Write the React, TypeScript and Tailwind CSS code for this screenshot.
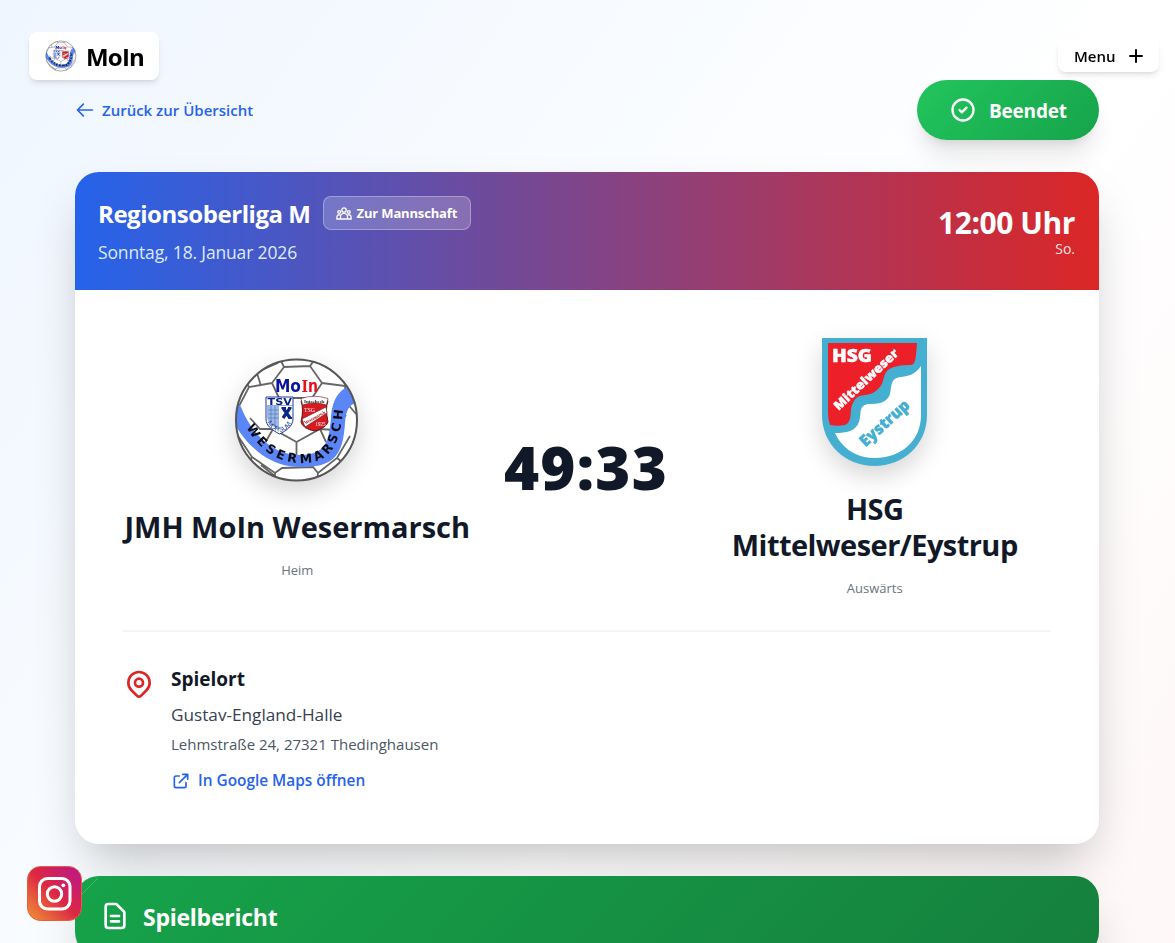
import type { ReactNode } from "react";

function Icon({ d, className, strokeWidth = 2 }: { d: string; className: string; strokeWidth?: number }) {
  return (
    <svg
      viewBox="0 0 24 24"
      fill="none"
      stroke="currentColor"
      strokeWidth={strokeWidth}
      strokeLinecap="round"
      strokeLinejoin="round"
      className={className}
    >
      <path d={d} />
    </svg>
  );
}

const icons = {
  arrowLeft: "M10 19l-7-7m0 0l7-7m-7 7h18",
  checkCircle: "M9 12l2 2 4-4m6 2a9 9 0 11-18 0 9 9 0 0118 0z",
  pin: "M17.657 16.657L13.414 20.9a1.998 1.998 0 01-2.827 0l-4.244-4.243a8 8 0 1111.314 0zM15 11a3 3 0 11-6 0 3 3 0 016 0z",
  external: "M10 6H6a2 2 0 00-2 2v10a2 2 0 002 2h10a2 2 0 002-2v-4M14 4h6m0 0v6m0-6L10 14",
  document:
    "M9 12h6m-6 4h6m2 5H7a2 2 0 01-2-2V5a2 2 0 012-2h5.586a1 1 0 01.707.293l5.414 5.414a1 1 0 01.293.707V19a2 2 0 01-2 2z",
  plus: "M12 3v18M3 12h18",
};

function TeamIcon({ className }: { className: string }) {
  return (
    <svg viewBox="0 0 16 13" fill="none" stroke="currentColor" strokeWidth={1.3} className={className}>
      <circle cx="8" cy="3" r="2.200" />
      <circle cx="3.200" cy="5" r="1.400" />
      <circle cx="12.800" cy="5" r="1.400" />
      <path d="M4.500 12V9.900a3.500 3.500 0 017 0V12zM4.500 12H.9v-2a2.300 2.300 0 013.300-2M11.500 12h3.600v-2a2.300 2.300 0 00-3.300-2" />
    </svg>
  );
}

function MoinCrest({ id, className }: { id: string; className: string }) {
  return (
    <svg viewBox="0 0 128 128" className={className}>
      <defs>
        <clipPath id={`${id}-ball`}>
          <circle cx="63.5" cy="64" r="60.5" />
        </clipPath>
        <path id={`${id}-text`} d="M13.500 71C26 95 46 107 69 107C96 107 107 91 110 54" />
      </defs>
      <circle cx="63.5" cy="64" r="60.5" fill="#fff" />
      <g clipPath={`url(#${id}-ball)`}>
        <path
          fill="none"
          stroke="#666"
          strokeWidth="1.800"
          d="M47 3L51 11 77 10 82 3M51 11L39 27 46 42 79 42 89 27 77 10M39 27L16 31 5 52M16 31L13 26 24 16 45 7M89 27L112 30 116 26M112 30L113 46 123 58M82 5L99 10 117 28M63.5 86L40 73 27 73 17 62M63.5 86L87 73 101 74 113 59M63.5 86V104M40 73L32 87M87 73L93 86M5 80L19 101 16 107M19 101L42 117 49 112 80 111 85 117 104 102 117 80M42 117L42 125M85 117L84 125M104 102L109 106M28 109L43 121M24 17L28 30"
        />
        <path
          d="M2 43L8 51C20 81 42 99 67 99C93 99 96 85 98 62C99 42 108 32 118 30L128 47C117 46 113 53 112 67C110 97 103 111 70 111C36 112 13 89 0 65z"
          fill="#5b86f7"
        />
      </g>
      <circle cx="63.5" cy="64" r="60.5" fill="none" stroke="#555" strokeWidth="2" />
      <text
        x="42"
        y="35.500"
        fontSize="17"
        textLength="26"
        lengthAdjust="spacingAndGlyphs"
        className="font-['DejaVu_Sans'] font-bold"
        fill="#0a14a0"
      >
        Mo
      </text>
      <text
        x="68.500"
        y="35.500"
        fontSize="17"
        textLength="16.500"
        lengthAdjust="spacingAndGlyphs"
        className="font-['DejaVu_Serif'] font-bold"
        fill="#e8101c"
      >
        I<tspan className="font-['DejaVu_Sans']">n</tspan>
      </text>
      <path d="M33 41H60V63C60 70 53 75 46.500 78C39 74 33 70 33 63z" fill="#fff" stroke="#1b3a9d" strokeWidth="1" />
      <path d="M34 50H46V74C39 70 34 67 34 60z" fill="#9db9e6" />
      <path d="M34 49.500H60M35 54H46M35 58H46M35 62H46M38 50V68M42 50V71" stroke="#4b70bd" strokeWidth=".6" />
      <path d="M50 52L57 62M57 52L50 62" stroke="#0b258f" strokeWidth="3.200" />
      <path d="M48.500 52H53M55 52H58.500M55.500 62H59" stroke="#0b258f" strokeWidth="2" />
      <text
        x="34.500"
        y="48.500"
        fontSize="8.500"
        textLength="24.500"
        lengthAdjust="spacingAndGlyphs"
        fill="#0b1d80"
        className="font-['DejaVu_Sans'] font-bold"
      >
        TSV
      </text>
      <path id={`${id}-morsum`} d="M34.500 66Q38 75 47 75.500Q56 75 59 64" fill="none" />
      <text fontSize="6.500" fill="#1b3a9d" className="font-['Liberation_Sans']">
        <textPath href={`#${id}-morsum`} textLength="31">
          MORSUM
        </textPath>
      </text>
      <path
        d="M68 45Q81 40 95 45Q92 52 95 66Q93 72 82 75Q70 73 68 66Q71 53 68 45z"
        fill="#d81920"
        stroke="#641318"
        strokeWidth="1"
      />
      <path
        d="M68 42.500Q81 38 95 42.500L93.500 49Q81 45 69.500 49zM69 63L93 51 94 57 72 71z"
        fill="#fff"
        stroke="#641318"
        strokeWidth=".6"
      />
      <text
        x="71"
        y="46.500"
        fontSize="5"
        textLength="21"
        lengthAdjust="spacingAndGlyphs"
        fill="#222"
        className="font-['Liberation_Serif'] font-bold"
      >
        Intschede
      </text>
      <text
        x="71"
        y="56"
        fontSize="6"
        textLength="11"
        lengthAdjust="spacingAndGlyphs"
        fill="#fff"
        className="font-['Liberation_Serif']"
      >
        TSG
      </text>
      <text
        transform="translate(72.500 68.500) rotate(-29)"
        fontSize="5"
        textLength="23"
        lengthAdjust="spacingAndGlyphs"
        fill="#a3141a"
        className="font-['Liberation_Serif'] font-bold"
      >
        Wesermarsch
      </text>
      <text
        x="82.500"
        y="70"
        fontSize="5.500"
        textLength="10"
        lengthAdjust="spacingAndGlyphs"
        fill="#fff"
        className="font-['Liberation_Serif']"
      >
        1925
      </text>
      <text fontSize="12.500" fill="#080a14" className="font-['DejaVu_Sans'] font-bold">
        <textPath href={`#${id}-text`} textLength="146">
          WESERMARSCH
        </textPath>
      </text>
    </svg>
  );
}

function HsgCrest({ className }: { className: string }) {
  return (
    <svg viewBox="0 0 105 128" className={className}>
      <path d="M0 0H105V77C105 107 81 128 52.500 128S0 107 0 77z" fill="#45afd2" />
      <path
        d="M6 5H95C94 17 94 27 89 27C79 27 70 28 65 33C60 39 63 45 56 51C48 60 37 54 32 63C26 72 32 83 23 87C18 88 13 88 8 87Q6 81 6 75z"
        fill="#ed1f29"
      />
      <path
        d="M99 28V77C99 103 79 120 52.500 120C34 120 20 110 13 95C24 95 34 93 37 84C40 75 36 68 46 66C57 66 65 65 68 56C70 48 68 40 79 39C89 38 94 35 99 28z"
        fill="#fff"
      />
      <g className="font-['Open_Sans'] font-extrabold" strokeWidth=".4">
        <text x="10" y="23.500" fontSize="17" fill="#fff" stroke="#fff" textLength="40" lengthAdjust="spacingAndGlyphs">
          HSG
        </text>
        <text
          transform="translate(16.500 73) rotate(-43)"
          fontSize="12.500"
          fill="#fff"
          stroke="#fff"
          textLength="83"
          lengthAdjust="spacingAndGlyphs"
        >
          Mittelweser
        </text>
        <text
          transform="translate(43.500 109.500) rotate(-42)"
          fontSize="16"
          fill="#45afd2"
          stroke="#45afd2"
          textLength="61"
          lengthAdjust="spacingAndGlyphs"
        >
          Eystrup
        </text>
      </g>
    </svg>
  );
}

function Team({ name, side, children }: { name: ReactNode; side: string; children: ReactNode }) {
  return (
    <div className="flex min-w-0 flex-1 flex-col items-center text-center">
      <div className="mb-[25px] drop-shadow-[0_10px_12px_rgba(0,0,0,0.16)]">{children}</div>
      <h2 className="text-[29px] leading-9 font-bold text-[#111827]">{name}</h2>
      <p className="mt-[15px] text-[13px] leading-5 text-[#6b7280]">{side}</p>
    </div>
  );
}

function InstagramButton() {
  return (
    <a href="#" className="fixed bottom-[22px] left-[27px] z-40 block size-[55px]" aria-label="Instagram">
      <svg viewBox="0 0 55 55" className="size-full">
        <defs>
          <linearGradient id="insta" x1="0" y1="1" x2="1" y2="0">
            <stop offset="0.1" stopColor="#ec8037" />
            <stop offset="0.5" stopColor="#dc2743" />
            <stop offset="0.95" stopColor="#bc1888" />
          </linearGradient>
        </defs>
        <rect x=".5" y=".5" width="54" height="54" rx="13" fill="url(#insta)" stroke="#e4603c" />
        <g fill="none" stroke="#fff" strokeWidth="3">
          <rect x="12.500" y="12.500" width="30.500" height="30.500" rx="8" />
          <circle cx="27.500" cy="28" r="7.200" />
        </g>
        <circle cx="36.300" cy="19.300" r="1.900" fill="#fff" />
      </svg>
    </a>
  );
}

export default function App() {
  return (
    <div className="h-[943px] overflow-hidden bg-linear-to-br/srgb from-[#eff6ff] via-white to-[#fef2f2] bg-[length:100%_1600px] bg-no-repeat font-['Open_Sans',sans-serif]">
      <a
        href="#"
        className="fixed top-8 left-[29px] z-40 flex h-12 w-[130px] items-center gap-[9px] rounded-lg bg-white px-4 shadow-md"
      >
        <MoinCrest id="nav" className="size-8 shrink-0" />
        <span className="pt-0.5 text-2xl font-bold tracking-[-0.8px] text-black">MoIn</span>
      </a>
      <button
        type="button"
        className="fixed top-10 right-4 z-40 flex h-8 w-[101px] items-center justify-between rounded-lg bg-white pr-[15px] pl-4 text-[15px] font-semibold text-black shadow-md"
      >
        <span className="pt-px">Menu</span>
        <Icon d={icons.plus} strokeWidth={3} className="size-4" />
      </button>

      <main className="ml-[75px] w-full max-w-5xl pt-20">
        <div className="mb-8 flex items-center justify-between">
          <a href="#" className="flex items-center gap-[7px] text-[15px] font-semibold text-[#2563eb]">
            <Icon d={icons.arrowLeft} className="size-5" />
            <span className="pt-px">Zurück zur Übersicht</span>
          </a>
          <div className="flex h-15 w-[182px] items-center gap-3 rounded-full bg-linear-135/srgb from-[#22c55e] to-[#16a34a] px-8 text-[19px] font-bold tracking-[-0.2px] text-white shadow-xl">
            <Icon d={icons.checkCircle} className="size-7 shrink-0" />
            <span className="pt-0.5">Beendet</span>
          </div>
        </div>

        <section className="mb-8 h-[672px] overflow-hidden rounded-3xl bg-white shadow-2xl">
          <header className="flex h-[118px] items-center justify-between bg-linear-to-r/srgb from-[#2563eb] to-[#dc2626] p-6 pl-[23px] text-white">
            <div>
              <div className="mb-2 flex items-center gap-3">
                <h1 className="pt-0.5 text-2xl font-bold tracking-[-0.45px]">Regionsoberliga M</h1>
                <a
                  href="#"
                  className="flex h-[34px] w-[148px] items-center gap-[5px] rounded-lg border border-white/30 bg-white/20 px-3 text-[13px] font-bold tracking-[-0.15px] whitespace-nowrap"
                >
                  <TeamIcon className="h-[13px] w-4 shrink-0" />
                  <span className="pt-px">Zur Mannschaft</span>
                </a>
              </div>
              <p className="text-[17.5px] leading-7 tracking-[-0.15px] text-[#dbeafe]">Sonntag, 18. Januar 2026</p>
            </div>
            <div className="text-right">
              <div className="pt-0.5 text-3xl leading-9 font-bold tracking-[-0.45px]">12:00 Uhr</div>
              <div className="-mt-0.5 text-sm text-[#fee2e2]">So.</div>
            </div>
          </header>

          <div className="p-12">
            <div className="flex items-center gap-8 pr-0.5">
              <Team name={<span className="whitespace-nowrap">JMH MoIn Wesermarsch</span>} side="Heim">
                <MoinCrest id="home" className="size-32" />
              </Team>
              <div className="w-[165px] text-center text-6xl font-black tracking-[1.2px] whitespace-nowrap text-[#111827]">
                <div className="-mx-2 -mt-0.5">49:33</div>
              </div>
              <Team name={<span className="tracking-[-0.55px]">HSG Mittelweser/Eystrup</span>} side="Auswärts">
                <HsgCrest className="h-32 w-[105px]" />
              </Team>
            </div>

            <div className="mt-8 flex items-start gap-4 border-t-2 border-[#f3f4f6] pt-8">
              <Icon d={icons.pin} className="mt-1 size-8 text-[#dc2626]" />
              <div>
                <h3 className="mb-2 pt-px text-[19px] leading-7 font-bold text-[#111827]">Spielort</h3>
                <p className="text-[17.200px] leading-7 text-[#374151]">Gustav-England-Halle</p>
                <p className="mt-[3px] text-[15px] leading-6 text-[#4b5563]">Lehmstraße 24, 27321 Thedinghausen</p>
                <a
                  href="#"
                  className="mt-3 inline-flex items-center gap-[7px] text-[15.400px] leading-6 font-semibold text-[#2563eb]"
                >
                  <Icon d={icons.external} className="size-5" />
                  <span className="pt-px">In Google Maps öffnen</span>
                </a>
              </div>
            </div>
          </div>
        </section>

        <section className="relative overflow-hidden rounded-3xl bg-white shadow-2xl">
          <header className="flex items-center gap-3 bg-linear-135/srgb from-[#16a34a] to-[#15803d] p-6 text-white">
            <Icon d={icons.document} className="size-8" />
            <h2 className="pt-0.5 text-[23px] leading-[30px] font-bold tracking-[-0.25px]">Spielbericht</h2>
          </header>
          {/* hairline glint across the rounded corner */}
          <svg viewBox="0 0 24 24" className="absolute top-0 left-0 size-6" stroke="#fff" strokeOpacity=".35">
            <path d="M6 19L23 2" strokeWidth=".6" />
          </svg>
        </section>
      </main>

      <InstagramButton />
    </div>
  );
}
